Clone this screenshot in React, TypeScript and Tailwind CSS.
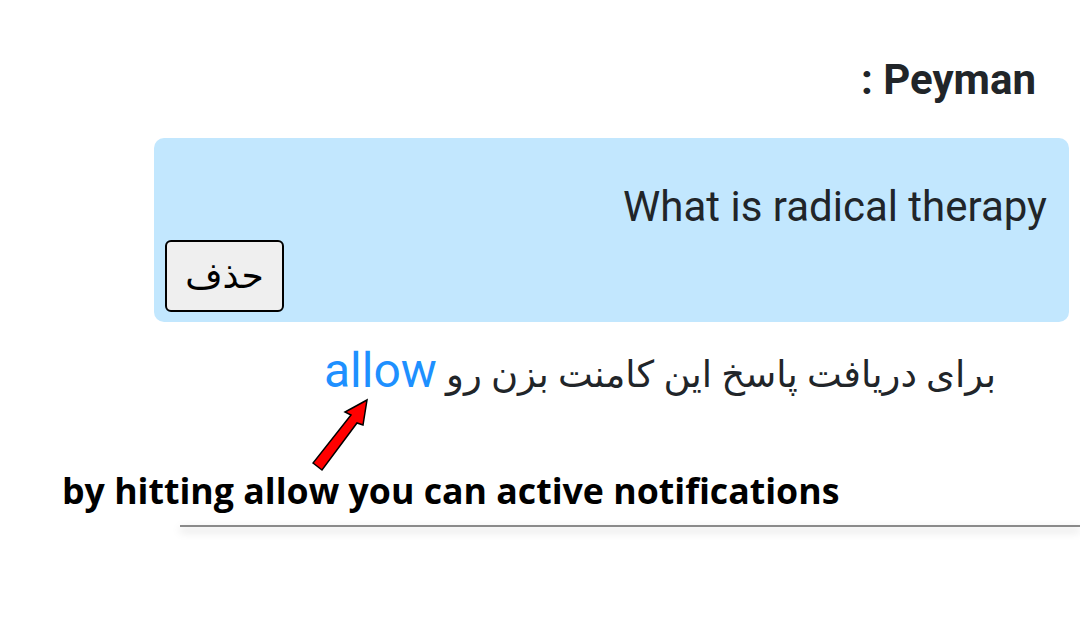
import React from 'react';

const Arrow = () => (
  <svg
    className="absolute left-[300px] top-[390px]"
    width="90"
    height="90"
    viewBox="0 0 90 90"
  >
    <polygon
      points="13,73 22,80 57,33 63,35 67,10 45,22 51,25"
      fill="#ff0000"
      stroke="#000"
      strokeWidth="1.5"
      strokeLinejoin="miter"
    />
  </svg>
);

export default function App() {
  return (
    <div className="relative w-[1080px] h-[627px] bg-white overflow-hidden" dir="rtl">
      <div className="pt-[55px] pr-[44px] text-[#212529] font-bold text-[42px] leading-[1.2] font-['Roboto',sans-serif]">
        Peyman :
      </div>

      <div className="mt-[33px] ml-[154px] mr-[11px] h-[184px] rounded-[10px] bg-[#c2e7fe] pt-[44px] pr-[22px] pl-[11px] font-['Roboto',sans-serif]">
        <p className="text-[42px] leading-[1.17] text-[#212529]">What is radical therapy</p>
        <div className="mt-[8px] flex justify-end">
          <button className="w-[119px] h-[72px] rounded-[6px] border-2 border-black bg-[#efefef] text-[36px] text-black font-['DejaVu_Sans',sans-serif]">
            حذف
          </button>
        </div>
      </div>

      <div className="mt-[25px] pr-[84px] text-[37px] leading-[48px] text-[#212529] font-['Roboto','DejaVu_Sans',sans-serif]">
        برای دریافت پاسخ این کامنت بزن رو <span className="text-[#1e90ff] text-[48px] leading-[48px]">allow</span>
      </div>

      <div dir="ltr" className="mt-[70px] pl-[62px] text-[35.7px] font-bold leading-[1.2] text-black font-['Open_Sans',sans-serif]">
        by hitting allow you can active notifications
      </div>

      <div className="mt-[13px] ml-[180px] h-[2px] bg-[#8a8a8a] shadow-[0_4px_8px_rgba(0,0,0,0.25)]" />

      <Arrow />
    </div>
  );
}
